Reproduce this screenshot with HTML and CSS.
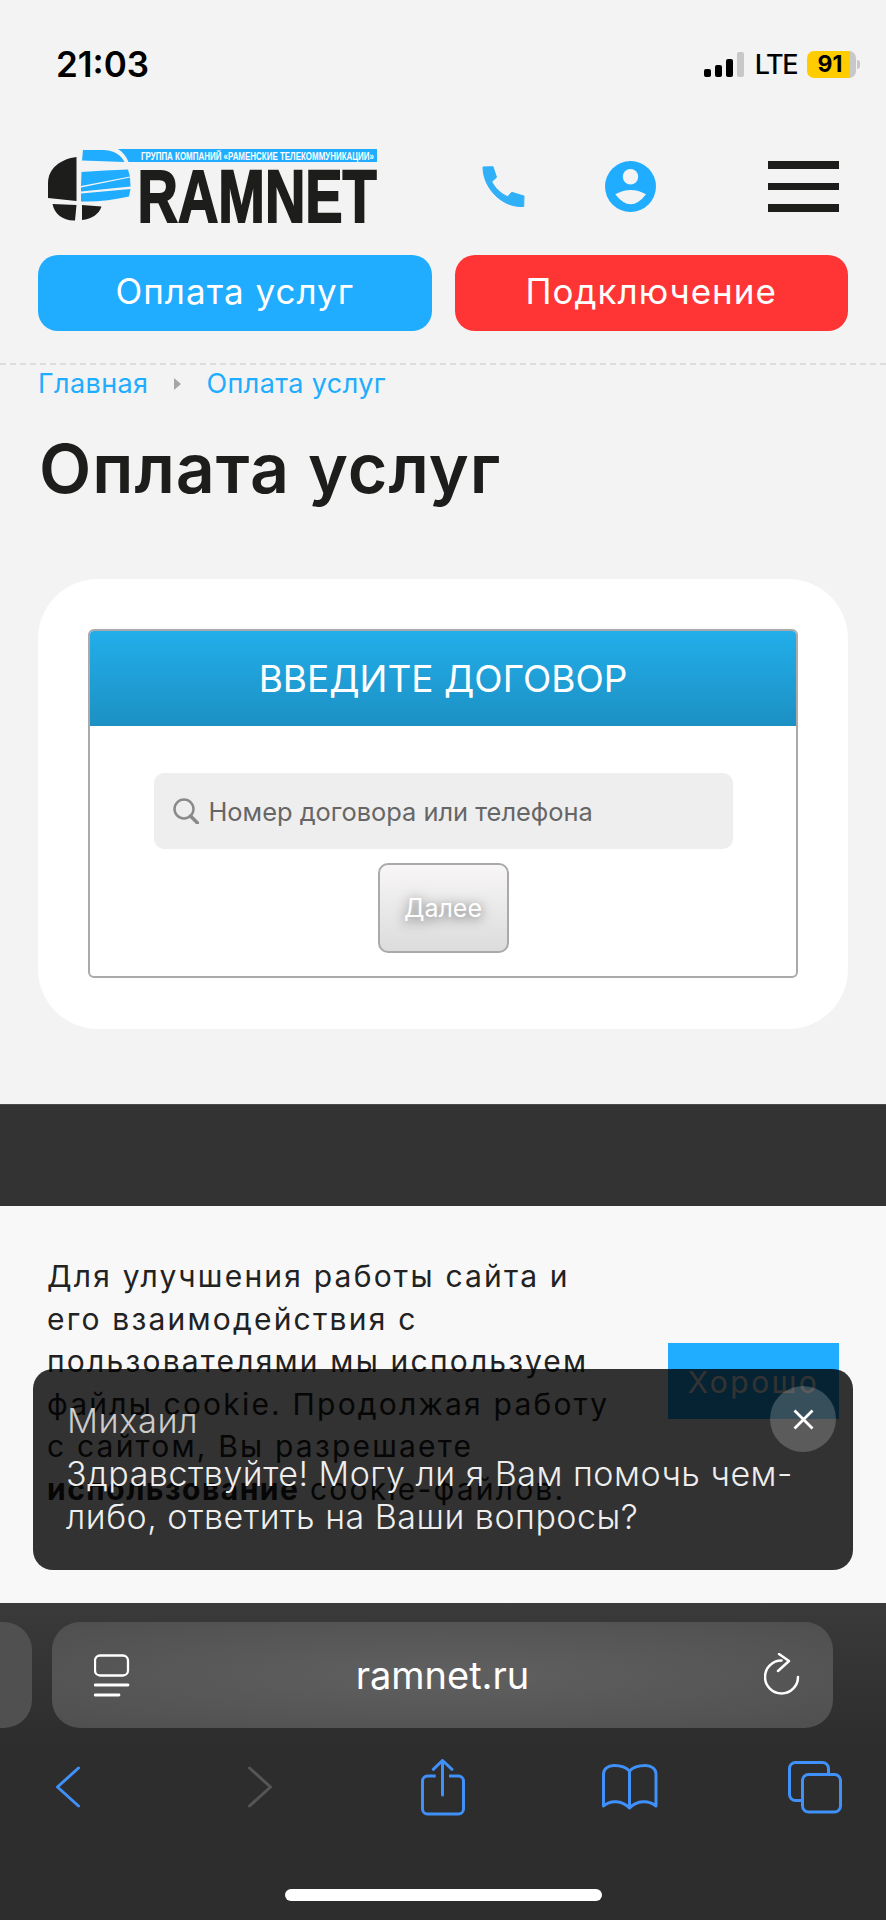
FILE: index.html
```html
<!DOCTYPE html>
<html lang="ru">
<head>
    <meta charset="UTF-8">
    <meta name="viewport" content="width=device-width, initial-scale=1.0">
    <title>Оплата услуг</title>
    <link rel="stylesheet" href="styles.css">
</head>
<body>
    <div class="page">
        <div class="status">
            <span class="time">21:03</span>
            <div class="status-right">
                <div class="signal"><i></i><i></i><i></i><i class="off"></i></div>
                <span class="lte">LTE</span>
                <div class="battery"><span>91</span></div>
                <div class="battery-tip"></div>
            </div>
        </div>

        <header class="header">
            <svg class="logo" viewBox="0 12 360 90" width="360" height="90">
                <path fill="#1d1d1b" d="M46.500 27C31 29 18 38 18 53L18 68L46.500 71Z"/>
                <path fill="#1d1d1b" d="M22.500 74L46.500 75L45 90.500C33 91 24.500 84 22.500 74Z"/>
                <path fill="#1d1d1b" d="M52 75L71.500 76.500C69 84 62 89 52 90Z"/>
                <path fill="#20adff" d="M53 20L73 20C84 20 91 25 94.500 32L52 30.500Z"/>
                <path fill="#20adff" d="M88 19L347 19L347 32L98.500 32C96 26 93 22 88 19Z"/>
                <path fill="#20adff" d="M51.500 42C67 41 83 40 98 39.500L100 46.500L51 56Z"/>
                <path fill="#20adff" d="M51 57.500L100 47.500L100.500 56.500L51 61.500Z"/>
                <path fill="#20adff" d="M51 63.500L100.500 59L99 66.500C84 70 67 72 51 71.500Z"/>
                <text class="logo-sub" transform="translate(111 29.500) scale(.75 1)" textLength="310.600" lengthAdjust="spacingAndGlyphs">ГРУППА КОМПАНИЙ «РАМЕНСКИЕ ТЕЛЕКОММУНИКАЦИИ»</text>
                <text class="logo-name" transform="translate(107.500 92) scale(.75 1)" textLength="319" lengthAdjust="spacingAndGlyphs">RAMNET</text>
            </svg>
            <svg class="icon-phone" viewBox="0 0 43 42" width="43" height="42">
                <path fill="#31b0fa" stroke="#31b0fa" stroke-width="1" stroke-linejoin="round" d="M1 1L11 .7L14.500 11.300L9.700 15.700C13 22 18.500 27.500 25.700 30.700L29.700 26.300L42 30L41.700 40.500C20 42 1 22 1 1Z"/>
            </svg>
            <svg class="icon-user" viewBox="0 0 51 51" width="51" height="51">
                <circle cx="25.500" cy="25.500" r="25.500" fill="#20adff"/>
                <circle cx="25.500" cy="15.700" r="7.700" fill="#f3f3f3"/>
                <path fill="#f3f3f3" d="M10.300 33.300Q25.700 24.700 41 33.300Q25.700 53.300 10.300 33.300Z"/>
            </svg>
            <div class="burger"><i></i><i></i><i></i></div>
        </header>

        <div class="actions">
            <a class="btn btn-blue">Оплата услуг</a>
            <a class="btn btn-red">Подключение</a>
        </div>

        <div class="crumbs">
            <a>Главная</a>
            <span class="crumb-arrow"></span>
            <a>Оплата услуг</a>
        </div>

        <h1 class="title">Оплата услуг</h1>

        <div class="card">
            <div class="form">
                <div class="form-head">ВВЕДИТЕ ДОГОВОР</div>
                <div class="form-body">
                    <div class="field">
                        <svg viewBox="0 0 26 26" width="26" height="26">
                            <circle cx="11" cy="11" r="9.500" fill="none" stroke="#8a8a8a" stroke-width="2.500"/>
                            <path d="M17.500 18L24.500 25" stroke="#8a8a8a" stroke-width="3.500" stroke-linecap="round"/>
                        </svg>
                        <span>Номер договора или телефона</span>
                    </div>
                    <div class="next">Далее</div>
                </div>
            </div>
        </div>

        <div class="footer-dark"></div>

        <div class="cookie">
            <p class="cookie-text">Для улучшения работы сайта и<br>его взаимодействия с<br>пользователями мы используем<br>файлы cookie. Продолжая работу<br>с сайтом, Вы разрешаете<br><b>использование</b> cookie-файлов.</p>
            <div class="cookie-ok">Хорошо</div>
        </div>

        <div class="safari">
            <div class="url-row">
                <div class="url-stub"></div>
                <div class="url">
                    <svg viewBox="0 0 36 44" width="36" height="44">
                        <rect x="1" y="2.500" width="33" height="20" rx="5" fill="none" stroke="#fff" stroke-width="2.300"/>
                        <path d="M1 32H34M1 42H25" stroke="#fff" stroke-width="2.800" stroke-linecap="round"/>
                    </svg>
                    <span class="url-text">ramnet.ru</span>
                    <svg viewBox="0 0 36 44" width="36" height="44">
                        <path d="M34 24A16.500 16.500 0 1 1 17.500 7.500" fill="none" stroke="#fff" stroke-width="2.500" stroke-linecap="round"/>
                        <path d="M15 1L25 8L14 18" fill="none" stroke="#fff" stroke-width="2.500" stroke-linecap="round" stroke-linejoin="round"/>
                    </svg>
                </div>
            </div>
            <div class="tools">
                <svg class="tool-back" viewBox="0 0 24 42" width="24" height="42">
                    <path d="M22.500 2L1.500 21L22.500 40" fill="none" stroke="#3f90f8" stroke-width="3" stroke-linecap="round" stroke-linejoin="round"/>
                </svg>
                <svg class="tool-forward" viewBox="0 0 24 42" width="24" height="42">
                    <path d="M1.500 2L22.500 21L1.500 40" fill="none" stroke="#555" stroke-width="3" stroke-linecap="round" stroke-linejoin="round"/>
                </svg>
                <svg class="tool-share" viewBox="0 0 44 57" width="44" height="57">
                    <path d="M14.700 17H6.500A5 5 0 0 0 1.500 22V50A5 5 0 0 0 6.500 55H37.500A5 5 0 0 0 42.500 50V22A5 5 0 0 0 37.500 17H28" fill="none" stroke="#3f90f8" stroke-width="3"/>
                    <path d="M21.500 36V2M12.300 10.300L21.500 1.500L31 10.300" fill="none" stroke="#3f90f8" stroke-width="3" stroke-linecap="round" stroke-linejoin="round"/>
                </svg>
                <svg class="tool-book" viewBox="0 0 56 48" width="56" height="48">
                    <path d="M27.500 8C24 4 18 2.500 12 2.500C6 2.500 1.500 6 1.500 11V43C8 37 20 37 27.500 45C35 37 47 37 54 43V11C54 6 49.500 2.500 43.500 2.500C37 2.500 31 4 27.500 8V45" fill="none" stroke="#3f90f8" stroke-width="3" stroke-linejoin="round" stroke-linecap="round"/>
                </svg>
                <svg class="tool-tabs" viewBox="0 0 54 53" width="54" height="53">
                    <path d="M13 39.500H7.500A6 6 0 0 1 1.500 33.500V7.500A6 6 0 0 1 7.500 1.500H34.500A6 6 0 0 1 40.500 7.500V12" fill="none" stroke="#3f90f8" stroke-width="3"/>
                    <rect x="14.500" y="13.500" width="38" height="37.500" rx="6" fill="none" stroke="#3f90f8" stroke-width="3"/>
                </svg>
            </div>
            <div class="home-bar"></div>
        </div>

        <div class="chat">
            <div class="chat-name">Михаил</div>
            <div class="chat-msg">Здравствуйте! Могу ли я Вам помочь чем-либо, ответить на Ваши вопросы?</div>
            <div class="chat-close">
                <svg viewBox="0 0 21 21" width="21" height="21"><path d="M1.500 1.500L19.500 19.500M19.500 1.500L1.500 19.500" stroke="#fff" stroke-width="2.800"/></svg>
            </div>
        </div>
    </div>
</body>
</html>
```

FILE: styles.css
```css
* {
    box-sizing: border-box;
}
body {
    margin: 0;
    font-family: Inter, "Noto Sans", sans-serif;
}
.page {
    position: relative;
    width: 886px;
    height: 1920px;
    overflow: hidden;
    background: #f3f3f3;
    color: #1d1d1b;
    display: flex;
    flex-direction: column;
}

/* status bar */
.status {
    height: 128px;
    flex: none;
    padding: 0 26px 0 56px;
    display: flex;
    justify-content: space-between;
    align-items: center;
    color: #000;
}
.time {
    font-size: 35px;
    font-weight: 600;
}
.status-right {
    display: flex;
    align-items: center;
}
.signal {
    display: flex;
    align-items: flex-end;
    gap: 4px;
    height: 25px;
    margin-right: 11px;
}
.signal i {
    width: 7px;
    height: 8px;
    background: #000;
    border-radius: 2px;
}
.signal i:nth-child(2) {
    height: 12px;
}
.signal i:nth-child(3) {
    height: 18px;
}
.signal i.off {
    height: 25px;
    background: #c8c8c8;
}
.lte {
    font-size: 27px;
    font-weight: 500;
    letter-spacing: -1.500px;
    margin-right: 10px;
}
.battery {
    width: 49px;
    height: 27px;
    border-radius: 7px;
    background: linear-gradient(to right, #ffcc00 88%, #c8c8c8 88%);
    font-size: 23px;
    font-weight: 700;
    display: flex;
    align-items: center;
    justify-content: center;
}
.battery span {
    margin-right: 3px;
}
.battery-tip {
    width: 3px;
    height: 9px;
    margin-left: 1px;
    background: #c8c8c8;
    border-radius: 0 3px 3px 0;
}

/* header */
.header {
    height: 127px;
    flex: none;
    padding: 0 0 10px 30px;
    display: flex;
    align-items: center;
}
.logo {
    flex: none;
}
.logo-sub {
    font-family: "Liberation Sans", sans-serif;
    font-size: 10px;
    font-weight: 700;
    fill: #fff;
}
.logo-name {
    font-family: "Liberation Sans", sans-serif;
    font-size: 75px;
    font-weight: 700;
    fill: #1d1d1b;
    stroke: #1d1d1b;
    stroke-width: 2px;
}
.icon-phone {
    margin-left: 92px;
}
.icon-user {
    margin-left: 80px;
}
.burger {
    margin-left: 112px;
    width: 71px;
    display: flex;
    flex-direction: column;
    gap: 14px;
}
.burger i {
    height: 7.500px;
    background: #1d1d1b;
}

.actions {
    display: flex;
    gap: 23px;
    padding: 0 38px;
    flex: none;
}
.btn {
    flex: 1;
    height: 76px;
    padding-bottom: 4px;
    border-radius: 20px;
    color: #fff;
    font-size: 35px;
    letter-spacing: 1px;
    display: flex;
    align-items: center;
    justify-content: center;
}
.btn-blue {
    background: #20adff;
}
.btn-red {
    background: #ff3535;
}

.crumbs {
    margin-top: 32px;
    border-top: 2px dashed #dddddd;
    padding: 0 0 5px 38px;
    height: 44px;
    flex: none;
    display: flex;
    align-items: center;
    font-size: 27px;
    letter-spacing: .4px;
    color: #20adff;
}
.crumb-arrow {
    width: 0;
    height: 0;
    margin: 0 25px 0 26px;
    border-left: 7px solid #a5a5a5;
    border-top: 6px solid transparent;
    border-bottom: 6px solid transparent;
}
.title {
    margin: 0;
    padding: 20px 0 0 39px;
    height: 172px;
    flex: none;
    font-size: 68px;
    font-weight: 600;
    letter-spacing: 1px;
    line-height: 82px;
    color: #1d1d1b;
}

.card {
    margin: 0 38px;
    height: 450px;
    flex: none;
    padding: 50px 50px 0;
    background: #fff;
    border-radius: 60px;
}
.form {
    height: 349px;
    border: 2px solid #aaaaaa;
    border-radius: 6px;
    overflow: hidden;
}
.form-head {
    height: 95px;
    background: linear-gradient(to bottom, #22aeea, #1c90c3);
    color: #fff;
    font-size: 37px;
    display: flex;
    align-items: center;
    justify-content: center;
}
.form-body {
    padding-top: 47px;
    display: flex;
    flex-direction: column;
    align-items: center;
}
.field {
    width: 579px;
    height: 76px;
    background: #eeeeee;
    border-radius: 10px;
    padding-left: 19px;
    display: flex;
    align-items: center;
    gap: 10px;
    font-size: 25.400px;
    color: #666;
}
.next {
    margin-top: 14px;
    width: 131px;
    height: 90px;
    border: 2px solid #aaaaaa;
    border-radius: 10px;
    background: linear-gradient(to bottom, #f8f6f6, #dcdcdc);
    color: #fff;
    font-size: 25px;
    display: flex;
    align-items: center;
    justify-content: center;
    text-shadow: 0 2px 12px #555;
}

.footer-dark {
    margin-top: 75px;
    height: 102px;
    flex: none;
    background: #333;
    border-top: 1px solid #4a4a4a;
}

.cookie {
    height: 397px;
    flex: none;
    background: #f8f8f8;
    padding: 49px 47px 0;
    display: flex;
    justify-content: space-between;
}
.cookie-text {
    margin: 0;
    font-size: 30px;
    line-height: 42.600px;
    letter-spacing: 2.200px;
    color: #222;
}
.cookie-text b {
    letter-spacing: 1.500px;
}
.cookie-ok {
    margin-top: 88px;
    width: 171px;
    height: 76px;
    padding-top: 2px;
    background: #20adff;
    color: #fff;
    font-size: 30px;
    letter-spacing: 2.500px;
    display: flex;
    align-items: center;
    justify-content: center;
}

/* chat popup */
.chat {
    position: absolute;
    left: 33px;
    top: 1369px;
    width: 820px;
    height: 201px;
    border-radius: 20px;
    background: rgba(0, 0, 0, 0.8);
    padding: 30px 32px 0 33px;
    font-weight: 300;
}
.chat-name {
    margin-left: 1px;
    font-size: 34.500px;
    letter-spacing: .5px;
    line-height: 44px;
    color: #cccccc;
}
.chat-msg {
    margin-top: 9px;
    font-size: 34px;
    letter-spacing: .5px;
    line-height: 43px;
    color: #eeeeee;
}
.chat-close {
    position: absolute;
    right: 17px;
    top: 17px;
    width: 66px;
    height: 66px;
    border-radius: 50%;
    background: rgba(255, 255, 255, 0.2);
    display: flex;
    align-items: center;
    justify-content: center;
}

/* browser bar */
.safari {
    flex: 1;
    background: linear-gradient(to bottom, #3a3a3a, #2d2d2d 45%);
    padding-top: 19px;
}
.url-row {
    display: flex;
    gap: 20px;
}
.url-stub {
    width: 32px;
    height: 106px;
    background: #505050;
    border-radius: 0 28px 28px 0;
}
.url {
    width: 781px;
    height: 106px;
    background: radial-gradient(ellipse at center, #606060, #4f4f4f);
    border-radius: 28px;
    padding: 0 33px 0 42px;
    display: flex;
    align-items: center;
    justify-content: space-between;
    color: #fff;
    font-size: 38px;
}
.url-text {
    margin-right: 9px;
}
.tools {
    height: 100px;
    margin-top: 9px;
    padding-left: 56px;
    display: flex;
    align-items: center;
}
.tool-forward {
    margin-left: 168px;
}
.tool-share {
    margin-left: 149px;
}
.tool-book {
    margin-left: 137px;
}
.tool-tabs {
    margin-left: 130px;
}
.home-bar {
    margin: 52px auto 0;
    width: 317px;
    height: 12px;
    border-radius: 6px;
    background: #fff;
}
```
